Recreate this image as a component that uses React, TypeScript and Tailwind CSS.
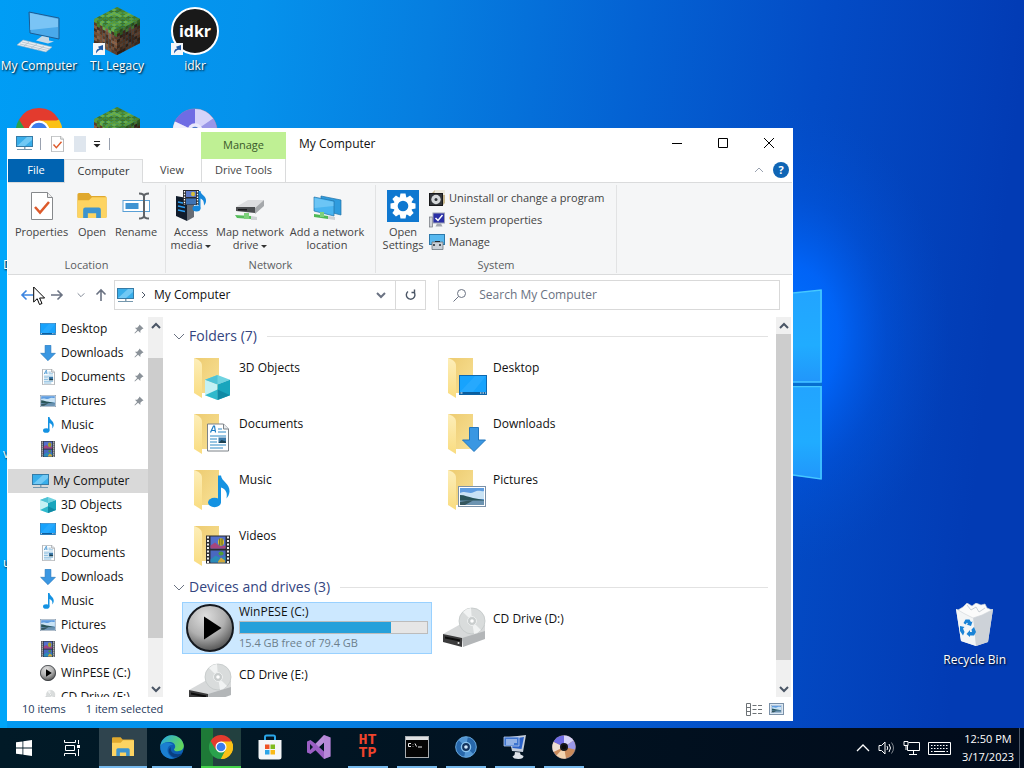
import type { CSSProperties, ReactNode } from "react";
import { useState } from "react";

type ArtProps = {
  x?: number;
  y?: number;
  width?: number;
  height?: number;
};

/* ---------- item artwork, shared by the tree and the folder tiles ---------- */

function CubeArt(props: ArtProps) {
  return (
    <svg viewBox="0 0 24 24" width={16} height={16} {...props}>
      <path d="M12 0 24 4.5 12 9 0 4.5z" fill="#6fd3e0" />
      <path d="M0 4.5 12 9v15L0 19.5z" fill="#c4f1f4" />
      <path d="M12 9 24 4.5v15L12 24z" fill="#19a5bd" />
      <path d="M0 19.5 12 14v10z" fill="#2fb9cc" />
      <path d="M12 14 24 19.5 12 24z" fill="#0f8aa5" />
      <path d="M0 4.5 12 0v9z" fill="#4fc3d6" />
    </svg>
  );
}

function DesktopArt(props: ArtProps) {
  return (
    <svg viewBox="0 0 28 20" width={16} height={12} {...props}>
      <rect x="0.5" y="0.5" width="27" height="19" fill="#17a3fd" stroke="#0c68b0" />
      <path d="M1 17 16 1h11L14 17z" fill="#35b0ff" opacity="0.5" />
      <rect x="1" y="17" width="26" height="2.5" fill="#0b5e9e" />
      <path d="M1.500 18h2M21 18h1.500M23.500 18h1.500M26 18h1" stroke="#fff" strokeWidth="1.200" />
    </svg>
  );
}

function DocumentArt(props: ArtProps) {
  return (
    <svg viewBox="0 0 22 28" width={13} height={16} {...props}>
      <path d="M.5.5h16l5 5v22H.5z" fill="#fff" stroke="#7c8288" />
      <path d="M16.500.5v5h5" fill="#e8ebee" stroke="#7c8288" />
      <path d="m3.500 9 3-6.500h1L8.500 9M5 7h3" fill="none" stroke="#1c7cc4" strokeWidth="1.200" />
      <path d="M11 5.500h4M11 8.500h8M3 12.500h16M3 15.500h7M3 18.500h7M3 21.500h16M3 24.500h13" stroke="#2f8ac6" />
      <rect x="11.500" y="14" width="7.500" height="5.500" fill="#3b78a8" />
      <path d="m11.500 19.500 3-3 4.500 1.500v1.500z" fill="#1d4252" />
    </svg>
  );
}

function DownloadArt(props: ArtProps) {
  return (
    <svg viewBox="0 0 24 25" width={16} height={16} {...props}>
      <path d="M7.500.5h9V13h7L12 24.500.5 13h7z" fill="#3a97e2" stroke="#2276bd" />
    </svg>
  );
}

function MusicArt(props: ArtProps) {
  return (
    <svg viewBox="0 0 22 32" width={11} height={16} {...props}>
      <ellipse cx="6.500" cy="27" rx="6.500" ry="4.700" fill="#1492e2" />
      <path d="M10 0h3c.5 6 9 8 8.500 16-.2 3-1.500 5-3 7 1-5 0-9-5.500-11v15h-3z" fill="#1492e2" />
    </svg>
  );
}

function PictureArt(props: ArtProps) {
  return (
    <svg viewBox="0 0 28 21" width={16} height={12} {...props}>
      <rect x="0.500" y="0.500" width="27" height="20" fill="#fff" stroke="#7b91a8" />
      <rect x="2" y="2" width="24" height="17" fill="#5f9de0" />
      <path d="M2 7c6-3 9 2 14-1s8 0 10-1v8H2z" fill="#c9e3f5" />
      <path d="M2 9c5 0 8 2 13 3l11 2v1H2z" fill="#29555a" />
      <path d="M2 14.500h24V19H2z" fill="#6c93b0" />
      <path d="m2 16 9-1.500h4L7 19H2z" fill="#35575f" />
    </svg>
  );
}

function VideoArt(props: ArtProps) {
  return (
    <svg viewBox="0 0 24 28" width={14} height={16} {...props}>
      <rect width="24" height="28" fill="#2a2c31" />
      <rect x="4.500" y="1" width="15" height="12" fill="#5470cc" />
      <rect x="4.500" y="15" width="15" height="12" fill="#4a68c0" />
      <path d="M4.500 10 9 7l5 4 5.500-1v3h-15z" fill="#a5457d" />
      <ellipse cx="15" cy="6.500" rx="3" ry="3.800" fill="#dfc32e" />
      <path d="M13.800 3v7M16 3v7" stroke="#4b5a1c" />
      <path d="m4.500 24 5-4 6 3 4-3v7h-15z" fill="#2b8cb8" />
      <ellipse cx="15" cy="18" rx="2.500" ry="2" fill="#4d9c38" />
      <path d="m12 26 3-4 4 3v2h-7z" fill="#d0a83a" />
      <path d="M2 1v27M22 1v27" stroke="#f0f0ef" strokeWidth="2" strokeDasharray="2 1.500" />
    </svg>
  );
}

function MonitorArt(props: ArtProps) {
  return (
    <svg viewBox="0 0 17 15" width={17} height={15} {...props}>
      <rect x="0.500" y="0.500" width="16" height="10" fill="#39aeea" stroke="#367ba6" />
      <path d="M1 10 11 1h5v3L9 10z" fill="#7fd0f7" opacity="0.800" />
      <path d="M8 11h1.500v2H8z" fill="#8aa2b2" />
      <path d="M1 13.500h15" stroke="#7597ad" />
    </svg>
  );
}

function PlayDisc({ width = 16, height = 16, x, y }: ArtProps) {
  return (
    <svg viewBox="0 0 48 48" width={width} height={height} x={x} y={y}>
      <defs>
        <radialGradient id="disc" cx="0.4" cy="0.25" r="0.85">
          <stop offset="0" stopColor="#dedede" />
          <stop offset="0.5" stopColor="#b0b0b0" />
          <stop offset="1" stopColor="#3b3b3b" />
        </radialGradient>
      </defs>
      <circle cx="24" cy="24" r="23" fill="url(#disc)" stroke="#15191f" strokeWidth="2" />
      <path d="M18 12.500v23L35.500 24z" fill="#000" />
    </svg>
  );
}

function CdDrive({ width = 48, height = 48, x, y }: ArtProps) {
  return (
    <svg viewBox="0 0 48 48" width={width} height={height} x={x} y={y}>
      <path d="m3 30 16-9h26v8l-19 9z" fill="#d7d9da" />
      <path d="M22 34 45 27v8L23 43z" fill="#b3b6b8" />
      <path d="m3 30 19 4v9L3 38z" fill="#3b3b3c" />
      <path d="m5 32.500 15 3v2l-15-3z" fill="#0d0d0d" />
      <circle cx="18.500" cy="39" r="1" fill="#e8e8e8" />
      <circle cx="32" cy="17" r="13" fill="#d9dcdc" stroke="#c2c6c6" strokeWidth="0.800" />
      <path d="M32 17 23 8a13 13 0 0 1 8-4zM32 17l9 9a13 13 0 0 1-7 4z" fill="#f1f3f3" />
      <circle cx="32" cy="17" r="4.500" fill="#c9cdcd" stroke="#eef0f0" />
      <circle cx="32" cy="17" r="1.800" fill="#fff" />
    </svg>
  );
}

function Folder({ children }: { children: ReactNode }) {
  return (
    <svg viewBox="0 0 48 48" className="size-12 shrink-0">
      <defs>
        <linearGradient id="folderBack" x1="0" y1="0" x2="1" y2="1">
          <stop offset="0" stopColor="#edcb70" />
          <stop offset="1" stopColor="#f8e196" />
        </linearGradient>
        <linearGradient id="folderFront" x1="0" y1="0" x2="0" y2="1">
          <stop offset="0" stopColor="#fdeeb9" />
          <stop offset="1" stopColor="#f9dc80" />
        </linearGradient>
      </defs>
      <path d="M8 5h25v35H14z" fill="url(#folderBack)" />
      <path d="M8 5c4 1.500 8 3 8 8v32l-8-5z" fill="url(#folderFront)" />
      {children}
    </svg>
  );
}

function OpenFolder({ width = 30, height = 26 }: ArtProps) {
  return (
    <svg viewBox="0 0 28 25" width={width} height={height}>
      <path d="M0 1.500Q0 0 1.500 0H11l2.500 3H26q2 0 2 1.500V23H0z" fill="#e0a92e" />
      <path d="M0 7h11l3-3h14v20H0z" fill="#fdd462" />
      <path d="M5.500 24v-8q0-2 2-2h13q2 0 2 2v8h-4.500v-4.500h-8V24z" fill="#3d94cf" />
    </svg>
  );
}

/* ---------- desktop ---------- */

const grass = ["#5c9a34", "#4a8329", "#6fae42", "#3f7323"];
const dirt = ["#7a4f33", "#5f3b25", "#8c5f42", "#4b2e1d"];

function shade(palette: string[], col: number, row: number) {
  return palette[(col * 7 + row * 5 + ((col * row) % 3)) % palette.length];
}

function GrassBlock() {
  const cells = Array.from({ length: 64 }, (_, i) => [i % 8, Math.floor(i / 8)]);
  return (
    <svg viewBox="0 0 46 48" className="h-12 w-[46px]">
      <g transform="matrix(2.875 -1.5 2.875 1.5 0 12)">
        {cells.map(([c, r]) => (
          <rect key={`${c}-${r}`} x={c} y={r} width="1.050" height="1.050" fill={shade(grass, c, r)} />
        ))}
      </g>
      <g transform="matrix(2.875 1.5 0 3 0 12)">
        {cells.map(([c, r]) => (
          <rect key={`${c}-${r}`} x={c} y={r} width="1.050" height="1.050" fill={shade(r < 1 + (c % 2) ? grass : dirt, c, r)} />
        ))}
      </g>
      <g transform="matrix(2.875 -1.5 0 3 23 24)">
        {cells.map(([c, r]) => (
          <rect key={`${c}-${r}`} x={c} y={r} width="1.050" height="1.050" fill={shade(r < 1 + (c % 2) ? grass : dirt, c, r)} />
        ))}
        <rect width="8" height="8" fill="#000" opacity="0.350" />
      </g>
    </svg>
  );
}

function DesktopPc() {
  return (
    <svg viewBox="0 0 44 44" className="size-11">
      <path d="m12 3 30 6v21l-29-6z" fill="#4aa9ea" stroke="#1d5c93" />
      <path d="m13 4 28 6v8L13 21z" fill="#8fd0fa" opacity="0.700" />
      <path d="m25 27 7 1.500v3l5 1-6 2-12-3z" fill="#c7d9e6" />
      <path d="m6 31 29 7-6 5-29-7z" fill="#e8eef3" stroke="#9db4c5" strokeWidth="0.600" />
      <path d="m5 33 28 7M3 35l28 6.500M12 33l-5 4M20 35l-6 4M27 37l-6 4" stroke="#a9bac6" strokeWidth="0.700" />
    </svg>
  );
}

function ChromeLogo({ className }: { className: string }) {
  return (
    <svg viewBox="0 0 48 48" className={className}>
      <path d="M24 24 3.200 12A24 24 0 0 1 44.800 12z" fill="#e33b2e" />
      <path d="M24 24 44.800 12A24 24 0 0 1 24 48z" fill="#fbc116" />
      <path d="M24 24v24A24 24 0 0 1 3.200 12z" fill="#2aa14c" />
      <path d="M24 13h20.800L34 30z" fill="#fbc116" />
      <path d="M3.200 12 14 30l10-17z" fill="#e33b2e" />
      <path d="M14.500 29.500 24 48l9.500-18.500z" fill="#2aa14c" />
      <path d="M33.500 29.500 24 48A24 24 0 0 0 48 24a24 24 0 0 0-1-7z" fill="#fbc116" />
      <circle cx="24" cy="24" r="11" fill="#fff" />
      <circle cx="24" cy="24" r="8.700" fill="#3b7ded" />
    </svg>
  );
}

function DiscLogo({ className, warm }: { className: string; warm?: boolean }) {
  return (
    <svg viewBox="0 0 48 48" className={className}>
      <circle cx="24" cy="24" r="23" fill={warm ? "#c98a5a" : "#b7b4ee"} stroke="#8a8aa8" />
      <path d="M24 24 3 14A23 23 0 0 1 24 1z" fill="#6f6ce4" />
      <path d="M24 24V1a23 23 0 0 1 19 10z" fill="#d5d3fa" />
      <path d="M24 24 43 11a23 23 0 0 1 3 18z" fill="#9a97e8" />
      <path d="m24 24-21-10a23 23 0 0 0 0 20z" fill={warm ? "#f0dfd3" : "#efeefc"} />
      <path d="m24 24 4 23a23 23 0 0 1-19-6z" fill={warm ? "#f2d3b0" : "#e4defa"} />
      <circle cx="24" cy="24" r="8" fill={warm ? "#15171c" : "#e9e8fb"} />
      <circle cx="24" cy="24" r="4.500" fill={warm ? "#0a0a0a" : "#4c78c8"} />
    </svg>
  );
}

function ShortcutBadge() {
  return (
    <svg viewBox="0 0 12 12" className="absolute bottom-0 -left-px size-3">
      <rect width="12" height="12" fill="#f5f7f9" />
      <path d="M3 10.500c0-3 .8-4.500 3.300-5L5 3.700 10 2v5.300L8 6.700C6 7 4.500 8 3 10.500z" fill="#1f5aa6" />
    </svg>
  );
}

function RecycleBin() {
  return (
    <svg viewBox="0 0 40 44" className="h-11 w-10">
      <path d="m1 6 17 7 20-7-5 33-12 4-15-5z" fill="#e4e7ea" />
      <path d="m1 6 17 7 3 30-15-5z" fill="#f3f5f6" />
      <path d="m38 6-20 7 3 30 12-4z" fill="#cdd2d8" />
      <path d="m3 7 5-3 4-4 5 3 4-3 5 2 4-1 2 4 5 2-10 5-9 3-8-4z" fill="#fbfbfb" stroke="#cfd4d8" strokeWidth="0.600" />
      <path d="m12 2 4 5 5-3 3 5 6-4" fill="none" stroke="#b8bfc6" strokeWidth="0.700" />
      <path d="m8.500 20 2-3.500h4l1.500 2.500 1.500-.5-1.500 4.500-4.500-1.500 1.500-.5-1-1.500-1.500 2z" fill="#1a83d6" />
      <path d="m5 23 4.500 1-1.500 1.500 1.500 3.500-1.500 3.500-3-4.500zM19 24l2 5-2 3.500h-4V34l-3.500-3 3.500-4v2h2l-.5-2.500z" fill="#1a83d6" />
    </svg>
  );
}

function DesktopItem({ label, children }: { label?: string; children: ReactNode }) {
  return (
    <button type="button" className="flex h-25 flex-col items-center gap-0.5 pt-[7px] text-white">
      <span className="relative flex h-12 w-[46px] items-center justify-center">{children}</span>
      {label && <span className="whitespace-nowrap text-shadow-[1px_1px_2px_#000]">{label}</span>}
    </button>
  );
}

function Wallpaper() {
  return (
    <svg
      viewBox="0 0 1024 728"
      preserveAspectRatio="none"
      aria-hidden="true"
      className="absolute inset-0 size-full"
    >
      <defs>
        <linearGradient id="sky" x1="0" y1="0" x2="1" y2="0.08">
          <stop offset="0" stopColor="#009df5" />
          <stop offset="0.25" stopColor="#0592ec" />
          <stop offset="0.42" stopColor="#067ee0" />
          <stop offset="0.62" stopColor="#0462d3" />
          <stop offset="0.8" stopColor="#034cc6" />
          <stop offset="1" stopColor="#023bb4" />
        </linearGradient>
        <radialGradient id="glow" cx="0.5" cy="0.5" r="0.5">
          <stop offset="0" stopColor="#0072ff" />
          <stop offset="0.3" stopColor="#0068ff" stopOpacity="0.85" />
          <stop offset="0.6" stopColor="#005cee" stopOpacity="0.35" />
          <stop offset="1" stopColor="#0050d0" stopOpacity="0" />
        </radialGradient>
        <linearGradient id="pane" x1="0" y1="0" x2="0" y2="1">
          <stop offset="0" stopColor="#22a4ff" />
          <stop offset="0.6" stopColor="#20acff" />
          <stop offset="1" stopColor="#2196fb" />
        </linearGradient>
      </defs>
      <rect width="1024" height="728" fill="url(#sky)" />
      <rect width="7" y="180" height="548" fill="#00aefd" opacity="0.600" />
      <ellipse cx="790" cy="335" rx="160" ry="230" fill="url(#glow)" />
      <path d="m700 304 122-14v92H700z" fill="url(#pane)" />
      <path d="M700 386h122v93l-122-14z" fill="url(#pane)" />
      <path d="m793 293 28-3v92h-28M793 386.500h28V479l-28-4" fill="none" stroke="#45c8ff" strokeWidth="1.500" />
      <path d="M700 384.500h122" stroke="#066fd0" strokeWidth="3" />
    </svg>
  );
}

/* ---------- explorer window ---------- */

function Chevron({ d, className }: { d: string; className: string }) {
  return (
    <svg viewBox="0 0 12 12" className={className} fill="none" stroke="currentColor">
      <path d={d} />
    </svg>
  );
}

const UP = "m2 8 4-4 4 4";
const DOWN = "m2 4 4 4 4-4";

function TitleBar() {
  return (
    <header className="flex h-[54px] items-start">
      <div className="flex h-full w-[193px] shrink-0 flex-col">
        <div className="flex h-[31px] items-center pl-2">
          <MonitorArt />
          <span className="ml-[7px] h-3 w-px bg-gray-400" />
          <button type="button" aria-label="Properties" className="ml-2.5">
            <CheckSheet className="h-4 w-[13px]" />
          </button>
          <span className="ml-2.5 h-4 w-3 bg-[#dfe6ee]" />
          <button type="button" aria-label="Customize Quick Access Toolbar" className="ml-1.5">
            <svg viewBox="0 0 10 10" className="size-2.5">
              <path d="M2 2.500h6" stroke="#222" />
              <path d="M1.500 5h7L5 8.500z" fill="#222" />
            </svg>
          </button>
          <span className="ml-[7px] h-3 w-px bg-gray-400" />
        </div>
        <nav className="flex flex-1 text-[11px]">
          <button type="button" className="w-14 bg-[#0063b1] text-white">File</button>
          <button type="button" className="z-10 -mb-px w-[79px] border border-b-0 border-[#dadbdc] bg-[#f5f6f7] text-[#333]">
            Computer
          </button>
          <button type="button" className="flex-1 text-[#444]">View</button>
        </nav>
      </div>
      <div className="mt-1 flex w-[85px] shrink-0 flex-col self-stretch text-[11px]">
        <div className="flex h-[27px] items-center justify-center bg-[#bff094] text-[#3a5a2a]">Manage</div>
        <button type="button" className="flex-1 border-x border-[#dadbdc] text-[#444]">Drive Tools</button>
      </div>
      <h1 className="ml-[13px] flex-1 pt-2 text-xs leading-4">My Computer</h1>
      <div className="flex h-full flex-col">
        <div className="flex h-[30px]">
          <button type="button" aria-label="Minimize" className="flex w-[46px] items-center justify-center">
            <svg viewBox="0 0 12 12" className="size-3"><path d="M1 6.500h10" stroke="#000" /></svg>
          </button>
          <button type="button" aria-label="Maximize" className="flex w-[46px] items-center justify-center">
            <svg viewBox="0 0 12 12" className="size-3"><path d="M1.500 1.500h9v9h-9z" fill="none" stroke="#000" /></svg>
          </button>
          <button type="button" aria-label="Close" className="flex w-[46px] items-center justify-center">
            <svg viewBox="0 0 12 12" className="size-3"><path d="m1 1 10 10M11 1 1 11" stroke="#000" /></svg>
          </button>
        </div>
        <div className="flex flex-1 items-center justify-end gap-2 pr-[3px]">
          <button type="button" aria-label="Minimize the Ribbon">
            <Chevron d={UP} className="size-3 text-gray-400" />
          </button>
          <button type="button" aria-label="Help" className="size-4 rounded-full bg-[#0f65b5] text-[11px] leading-4 font-bold text-white">
            ?
          </button>
        </div>
      </div>
    </header>
  );
}

function CheckSheet({ className }: { className: string }) {
  return (
    <svg viewBox="0 0 22 28" className={className}>
      <path d="M.5.5h16l5 5v22H.5z" fill="#fff" stroke="#86898c" />
      <path d="M16.500.5v5h5" fill="#eee" stroke="#86898c" />
      <path d="m4 15 5 5.500L18 10" fill="none" stroke="#dd5a2b" strokeWidth="2.500" />
    </svg>
  );
}

function RenameIcon() {
  return (
    <svg viewBox="0 0 32 32" className="size-8">
      <rect x="3" y="10.500" width="26.500" height="11" fill="#fff" stroke="#5aa0d6" />
      <rect x="5.500" y="13" width="13" height="6" fill="#3f93d2" />
      <path d="M19 3.500q5 0 5 3v19q0 3-5 3M29 3.500q-5 0-5 3M24 25.500q0 3 5 3" fill="none" stroke="#5f6367" strokeWidth="2" />
    </svg>
  );
}

function AccessMediaIcon() {
  return (
    <svg viewBox="0 0 32 32" className="size-8">
      <path d="m1 6 11 2v23L1 26z" fill="#111c2b" />
      <path d="m12 8 7-3v22l-7 4z" fill="#676c74" />
      <path d="m3 12 7 1.500M3 16l7 1.500M3 20l7 1.500" stroke="#2c9df0" strokeWidth="1.500" />
      <rect x="8" y="0" width="16" height="15" fill="#26292e" />
      <rect x="11" y="1" width="10" height="6" fill="#5d79c7" />
      <rect x="11" y="8.500" width="10" height="6" fill="#3f73b4" />
      <ellipse cx="18" cy="4" rx="2" ry="2.300" fill="#d6c13a" />
      <path d="M9.500 1v14M22.500 1v14" stroke="#fff" strokeWidth="1.300" strokeDasharray="1.500 1.200" />
      <ellipse cx="21.500" cy="18.500" rx="4" ry="3" fill="#1688dc" />
      <path d="M23.500 1h2c0 4 6 4.500 5.500 10 0 2-1 3-2 4.500 0-4-.5-5.500-3.500-7v10h-2z" fill="#1688dc" />
    </svg>
  );
}

function MapDriveIcon() {
  return (
    <svg viewBox="0 0 32 32" className="size-8">
      <path d="m2 17 12-7h16l-9 8z" fill="#dcdddf" />
      <path d="m21 18 9-8v6l-9 8z" fill="#a5a8ab" />
      <path d="M2 17h19v6L2 21z" fill="#4c4e51" />
      <path d="M4 19h9v1.500H4z" fill="#17181a" />
      <path d="m1 25 16 1v3l-14-1z" fill="#56bd5c" />
      <path d="M10 23h5v6h-5z" fill="#7ed17c" />
      <path d="m17 26 6 1v3h-6z" fill="#cfd2d4" />
    </svg>
  );
}

function AddNetworkIcon() {
  return (
    <svg viewBox="0 0 32 32" className="size-8">
      <path d="m10 6 20 4v15l-20-5z" fill="#2f9cde" stroke="#2373a8" strokeWidth="0.700" />
      <path d="m3 7 20 4v15L3 21z" fill="#49b4f0" stroke="#2373a8" strokeWidth="0.700" />
      <path d="m3.500 8 19 4v4l-19 2z" fill="#84d0f8" opacity="0.600" />
      <path d="m3 24 14 2v3L3 27z" fill="#4fb856" />
      <path d="M9 22h4v5H9z" fill="#7ed17c" />
      <path d="m17 26 7 1v3l-7-1z" fill="#cfd2d4" />
    </svg>
  );
}

function SettingsIcon() {
  const teeth = [0, 45, 90, 135, 180, 225, 270, 315];
  return (
    <svg viewBox="0 0 32 32" className="size-8">
      <rect width="32" height="32" fill="#0f78d0" />
      {teeth.map((angle) => (
        <path key={angle} d="M13.500 3.500h5l1 5h-7z" fill="#fff" transform={`rotate(${angle} 16 16)`} />
      ))}
      <circle cx="16" cy="16" r="9.300" fill="#fff" />
      <circle cx="16" cy="16" r="5.300" fill="#0f78d0" />
    </svg>
  );
}

function UninstallIcon() {
  return (
    <svg viewBox="0 0 16 16" className="size-4">
      <path d="M3 3 6 0h10v13l-2 2z" fill="#c8b88f" />
      <path d="M6 0h10v5H5z" fill="#ece9dd" />
      <rect x="0.500" y="3.500" width="13" height="12" fill="#33363a" stroke="#17181a" />
      <circle cx="7" cy="9.500" r="4.700" fill="#d5d8da" />
      <circle cx="7" cy="9.500" r="1.500" fill="#33363a" />
    </svg>
  );
}

function SystemPropsIcon() {
  return (
    <svg viewBox="0 0 16 16" className="size-4">
      <rect x="0.500" y="5" width="3" height="10" fill="#cfd1d6" stroke="#71757d" strokeWidth="0.700" />
      <rect x="4" y="1" width="11.500" height="10" fill="#2a2fa6" stroke="#9da2b5" />
      <path d="m6.500 6 2.500 2.500L13.500 3" fill="none" stroke="#fff" strokeWidth="1.500" />
      <path d="M8 11.500h4l1.500 3h-7z" fill="#a3a7b0" />
    </svg>
  );
}

function ManageIcon() {
  return (
    <svg viewBox="0 0 16 16" className="size-4">
      <rect x="0.500" y="0.500" width="15" height="10" fill="#57b8ef" stroke="#2d79ab" />
      <path d="M3 8h11v7.500H3z" fill="#c9d1d8" stroke="#5c6770" strokeWidth="0.700" />
      <path d="M5 10v2M11 10v2" stroke="#252b31" strokeWidth="1.500" />
      <path d="M6 7.500h5" stroke="#252b31" />
    </svg>
  );
}

function Caret() {
  return <span className="inline-block border-x-3 border-t-3 border-x-transparent border-t-[#333] align-middle" />;
}

function RibbonButton({ icon, children, className }: { icon: ReactNode; children: ReactNode; className: string }) {
  return (
    <button type="button" className={`flex flex-col items-center gap-[3px] pt-[3px] whitespace-nowrap ${className}`}>
      <span className="flex h-8 items-center">{icon}</span>
      <span className="leading-[13px]">{children}</span>
    </button>
  );
}

function RibbonGroup({ name, className, children }: { name: string; className: string; children: ReactNode }) {
  return (
    <section className={`flex flex-col justify-between border-r border-[#e2e3e4] pt-0.5 ${className}`}>
      <div className="flex items-start pl-[3px]">{children}</div>
      <div className="text-center leading-4 text-[#5a5d61]">{name}</div>
    </section>
  );
}

function Ribbon() {
  return (
    <div className="flex h-[93px] shrink-0 border-y border-[#dadbdc] bg-[#f5f6f7] pt-0.5 pb-px text-[11px] text-[#444]">
      <RibbonGroup name="Location" className="w-[158px]">
        <RibbonButton className="w-[61px]" icon={<CheckSheet className="h-7 w-[22px]" />}>Properties</RibbonButton>
        <RibbonButton className="w-10" icon={<OpenFolder />}>Open</RibbonButton>
        <RibbonButton className="w-12" icon={<RenameIcon />}>Rename</RibbonButton>
      </RibbonGroup>
      <RibbonGroup name="Network" className="w-[210px]">
        <RibbonButton className="w-11" icon={<AccessMediaIcon />}>
          Access<br />media <Caret />
        </RibbonButton>
        <RibbonButton className="w-[74px]" icon={<MapDriveIcon />}>
          Map network<br />drive <Caret />
        </RibbonButton>
        <RibbonButton className="w-20" icon={<AddNetworkIcon />}>
          Add a network<br />location
        </RibbonButton>
      </RibbonGroup>
      <RibbonGroup name="System" className="w-[241px]">
        <RibbonButton className="w-12" icon={<SettingsIcon />}>
          Open<br />Settings
        </RibbonButton>
        <div className="ml-0.5 flex flex-col">
          <button type="button" className="flex h-[22px] items-center gap-1"><UninstallIcon />Uninstall or change a program</button>
          <button type="button" className="flex h-[22px] items-center gap-1"><SystemPropsIcon />System properties</button>
          <button type="button" className="flex h-[22px] items-center gap-1"><ManageIcon />Manage</button>
        </div>
      </RibbonGroup>
    </div>
  );
}

function AddressBar() {
  const [query, setQuery] = useState("");
  return (
    <div className="flex h-[42px] shrink-0 items-center px-3 pb-0.5">
      <div className="flex w-[94px] items-center text-gray-500">
        <button type="button" aria-label="Back" className="text-[#3d85e0]">
          <svg viewBox="0 0 14 14" className="size-3.5" fill="none" stroke="currentColor" strokeWidth="1.600"><path d="M13 7H2M6.500 2.500 2 7l4.500 4.500" /></svg>
        </button>
        <button type="button" aria-label="Forward" className="ml-4">
          <svg viewBox="0 0 14 14" className="size-3.5" fill="none" stroke="currentColor" strokeWidth="1.600"><path d="M1 7h11M7.500 2.500 12 7l-4.500 4.500" /></svg>
        </button>
        <button type="button" aria-label="Recent locations" className="ml-3"><Chevron d={DOWN} className="size-2.5" /></button>
        <button type="button" aria-label="Up" className="ml-2">
          <svg viewBox="0 0 14 14" className="size-3.5" fill="none" stroke="currentColor" strokeWidth="1.600"><path d="M7 13V2M2.500 6.500 7 2l4.500 4.500" /></svg>
        </button>
      </div>
      <div className="flex h-[30px] min-w-0 flex-[318] items-center border border-[#d9d9d9] pl-0.5">
        <MonitorArt />
        <Chevron d="m4 3 3 3-3 3" className="ml-1 size-3 text-gray-600" />
        <a href="#my-computer" className="ml-1 flex-1 text-xs">My Computer</a>
        <button type="button" aria-label="Previous locations" className="mr-2">
          <Chevron d={DOWN} className="size-3 stroke-2 text-gray-500" />
        </button>
        <button type="button" aria-label="Refresh" className="flex h-full w-[30px] items-center justify-center border-l border-[#d9d9d9] text-gray-600">
          <svg viewBox="0 0 12 12" className="size-3" fill="none" stroke="currentColor" strokeWidth="1.400"><path d="M3 2.500A4.300 4.300 0 1 0 9 3.200M9.500.5v3h-3" /></svg>
        </button>
      </div>
      <label className="ml-3 flex h-[30px] min-w-0 flex-[336] items-center gap-3 border border-[#d9d9d9] pl-3.5">
        <svg viewBox="0 0 14 14" className="size-3.5 shrink-0 text-gray-500" fill="none" stroke="currentColor"><circle cx="8.500" cy="5.500" r="4" /><path d="m5.500 8.500-5 5" /></svg>
        <input
          type="text"
          aria-label="Search My Computer"
          placeholder="Search My Computer"
          value={query}
          onChange={(e) => setQuery(e.target.value)}
          className="min-w-0 flex-1 text-xs outline-none placeholder:text-gray-500"
        />
      </label>
    </div>
  );
}

function ScrollBar({ before, thumb, after }: { before: number; thumb: number; after: number }) {
  const grow = (n: number): CSSProperties => ({ flexGrow: n });
  return (
    <div className="flex w-[15px] shrink-0 flex-col bg-[#f0f0f0] text-gray-600">
      <button type="button" aria-label="Scroll up" className="flex h-[17px] items-center justify-center">
        <Chevron d={UP} className="size-3 stroke-2" />
      </button>
      <div style={grow(before)} />
      <div className="bg-[#cdcdcd]" style={grow(thumb)} />
      <div style={grow(after)} />
      <button type="button" aria-label="Scroll down" className="flex h-[17px] items-center justify-center">
        <Chevron d={DOWN} className="size-3 stroke-2" />
      </button>
    </div>
  );
}

function Pin() {
  return (
    <svg viewBox="0 0 11 11" className="mr-1 size-2.5">
      <path d="m6 .5 4.500 4.500-1.500.5-2 2v2.500L4.500 7.500 1 10.500l-.5-.5L3.500 6.500 1 4h2.500l2-2z" fill="#8b9299" />
    </svg>
  );
}

const quickAccess = [
  { name: "Desktop", icon: <DesktopArt />, pinned: true },
  { name: "Downloads", icon: <DownloadArt />, pinned: true },
  { name: "Documents", icon: <DocumentArt />, pinned: true },
  { name: "Pictures", icon: <PictureArt />, pinned: true },
  { name: "Music", icon: <MusicArt />, pinned: false },
  { name: "Videos", icon: <VideoArt />, pinned: false },
];

const computerTree = [
  { name: "3D Objects", icon: <CubeArt /> },
  { name: "Desktop", icon: <DesktopArt /> },
  { name: "Documents", icon: <DocumentArt /> },
  { name: "Downloads", icon: <DownloadArt /> },
  { name: "Music", icon: <MusicArt /> },
  { name: "Pictures", icon: <PictureArt /> },
  { name: "Videos", icon: <VideoArt /> },
  { name: "WinPESE (C:)", icon: <PlayDisc /> },
  { name: "CD Drive (E:)", icon: <CdDrive width={18} height={18} /> },
];

function TreeRow({ name, icon, pinned }: { name: string; icon: ReactNode; pinned?: boolean }) {
  return (
    <button type="button" className="flex h-6 w-full shrink-0 items-center gap-[5px] pl-8 text-left">
      <span className="flex w-4 shrink-0 justify-center">{icon}</span>
      <span className="flex-1 whitespace-nowrap">{name}</span>
      {pinned && <Pin />}
    </button>
  );
}

function Tree() {
  return (
    <nav className="flex w-[140px] shrink-0 flex-col overflow-hidden">
      {quickAccess.map((item) => (
        <TreeRow key={item.name} {...item} />
      ))}
      <button type="button" className="mt-2 flex h-6 shrink-0 items-center gap-1 bg-[#d9d9d9] pl-6 text-left">
        <MonitorArt />
        My Computer
      </button>
      {computerTree.map((item) => (
        <TreeRow key={item.name} {...item} />
      ))}
    </nav>
  );
}

const folders = [
  { name: "3D Objects", art: <CubeArt x={19} y={22} width={25} height={25} /> },
  { name: "Desktop", art: <DesktopArt x={19} y={22} width={28} height={20} /> },
  { name: "Documents", art: <DocumentArt x={21} y={14} width={22} height={29} /> },
  { name: "Downloads", art: <DownloadArt x={22} y={18} width={24} height={25} /> },
  { name: "Music", art: <MusicArt x={22} y={10} width={22} height={33} /> },
  { name: "Pictures", art: <PictureArt x={18} y={21} width={28} height={21} /> },
  { name: "Videos", art: <VideoArt x={20} y={14} width={24} height={29} /> },
];

function SectionHeader({ title }: { title: string }) {
  return (
    <h2 className="mr-2 flex h-[30px] shrink-0 items-center gap-1 text-sm text-[#34457f]">
      <Chevron d="m1 4 5 5 5-5" className="size-3 text-gray-500" />
      {title}
      <span className="ml-1.5 h-px flex-1 bg-[#e2e2e2]" />
    </h2>
  );
}

function Tile({ icon, name }: { icon: ReactNode; name: string }) {
  return (
    <button type="button" className="flex h-13 gap-[5px] px-1 py-0.5 text-left">
      <span className="size-12 shrink-0">{icon}</span>
      <span className="pt-[7px] leading-4">{name}</span>
    </button>
  );
}

function Content() {
  const used = (1 - 15.4 / 79.4) * 100;
  return (
    <main className="flex min-w-0 flex-1 flex-col overflow-hidden pt-1 pl-2.5">
      <SectionHeader title="Folders (7)" />
      <div className="mb-px ml-[9px] grid grid-cols-[250px_250px] gap-1">
        {folders.map((f) => (
          <Tile key={f.name} name={f.name} icon={<Folder>{f.art}</Folder>} />
        ))}
      </div>
      <SectionHeader title="Devices and drives (3)" />
      <div className="ml-[9px] grid grid-cols-[250px_250px] gap-1">
        <button type="button" className="flex h-13 gap-[5px] bg-[#cce8ff] px-1 py-0.5 text-left outline -outline-offset-1 outline-[#99d1ff]">
          <PlayDisc width={48} height={48} />
          <span className="flex-1">
            <span className="block leading-4">WinPESE (C:)</span>
            <span className="my-px block h-[13px] border border-[#bcbcbc] bg-[#e6e6e6]">
              <span className="block h-full bg-[#26a0da]" style={{ width: `${used}%` }} />
            </span>
            <span className="block text-[11px] leading-4 text-[#6d7f8c]">15.4 GB free of 79.4 GB</span>
          </span>
        </button>
        <Tile name="CD Drive (D:)" icon={<CdDrive />} />
        <Tile name="CD Drive (E:)" icon={<CdDrive />} />
      </div>
    </main>
  );
}

function StatusBar() {
  return (
    <footer className="flex h-6 shrink-0 items-center pr-2 pl-3.5 text-[11px] text-[#1e395b]">
      <span>10 items</span>
      <span className="ml-5 flex-1">1 item selected</span>
      <button type="button" aria-label="Details view" className="mr-[7px]">
        <svg viewBox="0 0 16 13" className="h-[13px] w-4" fill="none" stroke="#6d7276">
          <path d="M.5.5h4v12h-4zM.5 4.500h4M.5 8.500h4M6.500 2.500h4M12 2.500h4M6.500 6.500h4M12 6.500h4M6.500 10.500h4M12 10.500h4" />
        </svg>
      </button>
      <button type="button" aria-label="Large icons view" className="border border-[#7b91a8] bg-[#dbe9f5] p-px">
        <PictureArt width={11} height={8} />
      </button>
    </footer>
  );
}

function ExplorerWindow() {
  return (
    <div className="absolute top-32 right-[231px] bottom-[7px] left-[7px] flex flex-col overflow-hidden border-x border-white bg-white text-[#111]">
      <TitleBar />
      <Ribbon />
      <AddressBar />
      <div className="flex min-h-0 flex-1 pr-px">
        <Tree />
        <ScrollBar before={24} thumb={279} after={42} />
        <Content />
        <ScrollBar before={0} thumb={326} after={20} />
      </div>
      <StatusBar />
    </div>
  );
}

/* ---------- taskbar ---------- */

function EdgeLogo() {
  return (
    <svg viewBox="0 0 24 24" className="size-6">
      <defs>
        <linearGradient id="edgeTop" x1="0" y1="0" x2="1" y2="0.4">
          <stop offset="0" stopColor="#23a7e8" />
          <stop offset="1" stopColor="#62d65c" />
        </linearGradient>
      </defs>
      <circle cx="12" cy="12" r="11.800" fill="#0d5fb3" />
      <path d="M.3 12A11.800 11.800 0 0 1 23.800 10.500c.2 4-3 5.800-6.300 5.800-2.500 0-3.500-1-3.500-1.800 0-.7 1.200-1 1.200-3 0-2.500-2.200-4.500-5.700-4.500C5 7 .8 9 .3 12z" fill="url(#edgeTop)" />
      <path d="M.3 12C1 9 4 7.500 7.500 7.500c2.500 0 4.500 1 5.500 2.500-3-.5-5.500 1.500-5.500 5 0 4 3 7.500 7 8.300C7 25 .3 20 .3 12z" fill="#1b7fd0" />
      <path d="M11 12c-1.500 5 3 8.500 10.500 6.800l.5.200c-3 4-8.500 4.500-11.500 1S8.500 13.500 11 12z" fill="#0a3f82" />
    </svg>
  );
}

function StoreLogo() {
  return (
    <svg viewBox="0 0 24 26" className="h-[26px] w-6">
      <path d="M7 7V3q0-1.500 1.500-1.500h7Q17 1.500 17 3v4" fill="none" stroke="#2aa6e8" strokeWidth="2" />
      <path d="M.5 6h23v17q0 2.500-2.500 2.500H3Q.5 25.500.5 23z" fill="#f4f6f8" />
      <path d="M7 10.500h4.500V15H7z" fill="#ef5325" />
      <path d="M12.500 10.500H17V15h-4.500z" fill="#7fba1e" />
      <path d="M7 16h4.500v4.500H7z" fill="#2da5e8" />
      <path d="M12.500 16H17v4.500h-4.500z" fill="#f9b916" />
    </svg>
  );
}

function VisualStudioLogo() {
  return (
    <svg viewBox="0 0 24 26" className="h-[26px] w-6">
      <path
        fillRule="evenodd"
        d="M17 1 23.500 3.500v19L17 25l-8.500-8.700L3.500 20 0 18.500v-11L3.500 6l5 3.700zM17 8.500 12 13l5 4.500zM3 10v6l3-3z"
        fill="#9b5fc4"
      />
      <path d="M17 1 23.500 3.500v19L17 25z" fill="#c9a4e6" opacity="0.600" />
      <path d="m17 1-8.500 8.700L12 13l5-4.500z" fill="#d9bff0" opacity="0.500" />
    </svg>
  );
}

function HttpLogo() {
  return (
    <span className="flex flex-col font-mono text-[15px] leading-none font-bold text-[#f0442c]">
      <span className="h-[13px]">HT</span>
      <span className="h-[15px]">TP</span>
    </span>
  );
}

function TerminalLogo() {
  return (
    <svg viewBox="0 0 24 22" className="h-[22px] w-6">
      <rect x="0.500" y="0.500" width="23" height="21" fill="#050505" stroke="#a9adb1" />
      <rect x="1" y="1" width="22" height="3" fill="#dfe1e3" />
      <path d="M6 7.500H3.500v3H6M8 8v.5M8 10v.5M10 7.500l1.500 3M13 11h4" fill="none" stroke="#eee" />
    </svg>
  );
}

function BlueDiscLogo() {
  return (
    <svg viewBox="0 0 24 24" className="size-[22px]">
      <circle cx="12" cy="12" r="11.300" fill="#2767aa" stroke="#6fb0e6" />
      <path d="M12 12 4 4.500A11 11 0 0 1 14 1zM12 12l8 7.500A11 11 0 0 1 10 23z" fill="#67ade6" opacity="0.700" />
      <circle cx="12" cy="12" r="5" fill="#14345d" stroke="#8ac4ef" strokeWidth="1.500" />
      <circle cx="12" cy="12" r="2" fill="#cfe8fb" />
    </svg>
  );
}

function RunBoxLogo() {
  return (
    <svg viewBox="0 0 24 26" className="h-[26px] w-6">
      <path d="m6 3 17-2-3 17-11-1z" fill="#c5cedb" />
      <path d="m8 5 13-2-2.500 12-9-1z" fill="#2a61c8" />
      <path d="M1 3h15v9H1z" fill="#3d74cf" stroke="#b9cdf0" strokeWidth="0.800" />
      <path d="M3 6h11M3 8h11M3 10h8" stroke="#eaf1fc" />
      <path d="m12 18 5 .5.500 2 3 1.500q0 3-5 3t-6-2.500l2-1.500z" fill="#dde2e8" />
    </svg>
  );
}

type TaskState = "idle" | "running" | "active" | "alert";

const tasks: { name: string; state: TaskState; icon: ReactNode }[] = [
  { name: "File Explorer", state: "active", icon: <OpenFolder width={22} height={22} /> },
  { name: "Edge", state: "running", icon: <EdgeLogo /> },
  { name: "Chrome", state: "alert", icon: <ChromeLogo className="size-6" /> },
  { name: "Store", state: "idle", icon: <StoreLogo /> },
  { name: "Visual Studio", state: "idle", icon: <VisualStudioLogo /> },
  { name: "HTTP", state: "running", icon: <HttpLogo /> },
  { name: "Command Prompt", state: "running", icon: <TerminalLogo /> },
  { name: "Disc tool", state: "running", icon: <BlueDiscLogo /> },
  { name: "Run", state: "running", icon: <RunBoxLogo /> },
  { name: "Disc burner", state: "running", icon: <DiscLogo warm className="size-6" /> },
];

const taskStyle: Record<TaskState, string> = {
  idle: "w-10 border-transparent",
  running: "w-10 border-[#76b9ed]",
  active: "w-12 border-[#76b9ed] bg-[#2f444e]",
  alert: "w-10 border-[#45d44b] bg-linear-to-r from-[#1e7a37] from-30% to-[#22403f] to-30%",
};

function Taskbar() {
  return (
    <footer className="flex h-10 shrink-0 bg-linear-to-r from-[#011a27] to-[#010b1b] text-white">
      <button type="button" aria-label="Start" className="flex w-12 items-center justify-center">
        <svg viewBox="0 0 16 16" className="size-4" fill="#fff">
          <path d="m0 2.300 6.500-.9v6.200H0zM7.300 1.300 16 0v7.600H7.300zM0 8.400h6.500v6.200L0 13.700zM7.300 8.400H16V16l-8.700-1.300z" />
        </svg>
      </button>
      <button type="button" aria-label="Task View" className="mr-0.5 flex w-12 items-center justify-center">
        <svg viewBox="0 0 17 16" className="h-4 w-[17px]" fill="none" stroke="#fff">
          <path d="M.5 0v2.500h11V0M1.500 5.500h9v5h-9zM.5 16v-2.500h11V16M14.500 0v4M14.500 9v7" />
          <path d="M13 5h3v3h-3z" fill="#fff" stroke="none" />
        </svg>
      </button>
      {tasks.map((task) => (
        <button key={task.name} type="button" aria-label={task.name} className="flex w-[49px] justify-center">
          <span className={`flex h-full items-center justify-center border-b-2 ${taskStyle[task.state]}`}>{task.icon}</span>
        </button>
      ))}
      <div className="ml-auto flex items-center">
        <button type="button" aria-label="Show hidden icons">
          <svg viewBox="0 0 14 14" className="size-3.5" fill="none" stroke="#fff" strokeWidth="1.300"><path d="m1 10 6-6 6 6" /></svg>
        </button>
        <button type="button" aria-label="Volume" className="ml-2">
          <svg viewBox="0 0 17 14" className="h-3.5 w-[17px]" fill="none" stroke="#fff">
            <path d="M1 4.500h2.500L7 1v12L3.500 9.500H1zM9 5q1.500 2 0 4M11 3q3 4 0 8" />
            <path d="M13.500 1.500q4 5.500 0 11" opacity="0.500" />
          </svg>
        </button>
        <button type="button" aria-label="Network" className="ml-2">
          <svg viewBox="0 0 17 14" className="h-3.5 w-[17px]" fill="none" stroke="#fff">
            <path d="M5.500 1.500h11v8H4.500V5M10.500 10v3M6 13.500h8M1 .5h4v4H1zM3 4.500V9" />
          </svg>
        </button>
        <button type="button" aria-label="Keyboard" className="ml-2">
          <svg viewBox="0 0 23 13" className="h-[13px] w-[23px]" fill="none" stroke="#fff">
            <path d="M.5.500h22v12H.5z" />
            <path d="M3 3.500h17M3 6.500h17" strokeDasharray="1.500 1.500" />
            <path d="M3 9.500h1.500M6 9.500h11M18.500 9.500h1.500" />
          </svg>
        </button>
        <button type="button" className="mr-0.5 ml-2 w-[58px] text-center text-[11px] leading-[18px] whitespace-nowrap">
          12:50 PM<br />3/17/2023
        </button>
        <span className="mr-1 h-full w-px bg-gray-600" />
      </div>
    </footer>
  );
}

export default function App() {
  return (
    <div className="flex h-screen flex-col overflow-hidden font-['Open_Sans','Noto_Sans',sans-serif] text-[12px]">
      <div className="relative flex-1 overflow-hidden">
        <Wallpaper />
        <div className="relative grid w-[234px] grid-cols-3">
          <DesktopItem label="My Computer"><DesktopPc /></DesktopItem>
          <DesktopItem label="TL Legacy"><GrassBlock /><ShortcutBadge /></DesktopItem>
          <DesktopItem label="idkr">
            <span className="flex size-12 shrink-0 items-center justify-center rounded-full border-2 border-white bg-[#191919] text-base font-bold">
              idkr
            </span>
            <ShortcutBadge />
          </DesktopItem>
          <DesktopItem><ChromeLogo className="size-12" /></DesktopItem>
          <DesktopItem><GrassBlock /></DesktopItem>
          <DesktopItem><DiscLogo className="size-12" /></DesktopItem>
        </div>
        <div className="absolute top-64 left-[3px] flex h-[316px] flex-col justify-between text-white text-shadow-[1px_1px_2px_#000]">
          <span>D</span>
          <span className="pt-20">v</span>
          <span>u</span>
        </div>
        <button type="button" className="absolute top-[603px] right-[18px] flex flex-col items-center gap-1 text-white">
          <RecycleBin />
          <span className="text-shadow-[1px_1px_2px_#000]">Recycle Bin</span>
        </button>
        <ExplorerWindow />
        <svg viewBox="0 0 13 20" className="absolute top-[286px] left-[33px] h-5 w-[13px]">
          <path d="M.7 1v15l3.500-3.300L6.500 18.500l2.500-1-2.400-5.500h5z" fill="#fff" stroke="#000" />
        </svg>
      </div>
      <Taskbar />
    </div>
  );
}
